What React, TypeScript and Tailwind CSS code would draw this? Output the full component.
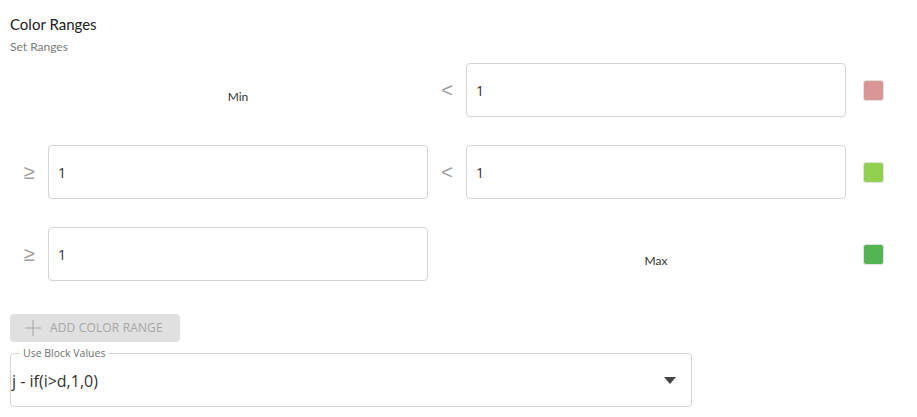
import { Plus } from "lucide-react";

const ranges = [
  { from: null, to: "1", color: "bg-[#d99694]" },
  { from: "1", to: "1", color: "bg-[#92d14f]" },
  { from: "1", to: null, color: "bg-[#52b551]" },
];

function Field({ value }: { value: string }) {
  return (
    <div className="w-[380px] h-[54px] border border-[#d4d4d4] rounded-[4px] flex items-center pl-[9px] text-[14px] text-[#333] font-['Open_Sans',sans-serif]">
      {value}
    </div>
  );
}

function Op({ sign }: { sign: string }) {
  return (
    <div className="w-[38px] h-[54px] flex items-center justify-center text-[20px] text-[#9e9e9e] font-['Liberation_Sans',sans-serif]">
      {sign}
    </div>
  );
}

function Bound({ label }: { label: string }) {
  return (
    <div className="w-[380px] h-[54px] flex items-center justify-center pt-[13px] text-[12px] text-[#333] font-['Lato',sans-serif]">
      {label}
    </div>
  );
}

export default function App() {
  return (
    <div className="w-[917px] h-[417px] bg-white pl-[10px] pt-[15px] overflow-hidden">
      {/* header */}
      <div className="text-[15px] leading-[19px] text-[#212121] font-['Lato',sans-serif]">Color Ranges</div>
      <div className="mt-[5px] text-[12px] leading-[15px] text-[#7a7a7a] font-['Lato',sans-serif]">Set Ranges</div>

      {/* ranges */}
      <div className="mt-[9px] flex flex-col gap-[28px]">
        {ranges.map((r, i) => (
          <div key={i} className="flex items-center">
            {r.from === null ? (
              <>
                <div className="w-[38px]" />
                <Bound label="Min" />
              </>
            ) : (
              <>
                <Op sign="≥" />
                <Field value={r.from} />
              </>
            )}
            {r.to === null ? (
              <>
                <div className="w-[38px]" />
                <Bound label="Max" />
              </>
            ) : (
              <>
                <Op sign="<" />
                <Field value={r.to} />
              </>
            )}
            <div className={`ml-[17px] w-[21px] h-[21px] rounded-[3px] border border-[#e2e2e2] ${r.color}`} />
          </div>
        ))}
      </div>

      {/* add button */}
      <button className="mt-[33px] h-[28px] pl-[10px] pr-[17px] flex items-center gap-[4px] bg-[#e0e0e0] rounded-[4px] text-[12px] tracking-[0.15px] text-[#a6a6a6] font-['Open_Sans',sans-serif]">
        <Plus size={26} strokeWidth={1} />
        ADD COLOR RANGE
      </button>

      {/* select */}
      <div className="relative mt-[11px] w-[682px] h-[54px] border border-[#d4d4d4] rounded-[4px] flex items-center justify-between pl-[1px] pr-[15px] font-['Open_Sans',sans-serif]">
        <span className="absolute -top-[8px] left-[9px] px-[3px] bg-white text-[10.5px] leading-[14px] text-[#707070]">Use Block Values</span>
        <span className="text-[16px] text-[#333] pt-[1px]">j - if(i&gt;d,1,0)</span>
        <svg width="12" height="7" viewBox="0 0 12 7">
          <path d="M0 0h12L6 7z" fill="#444" />
        </svg>
      </div>
    </div>
  );
}
